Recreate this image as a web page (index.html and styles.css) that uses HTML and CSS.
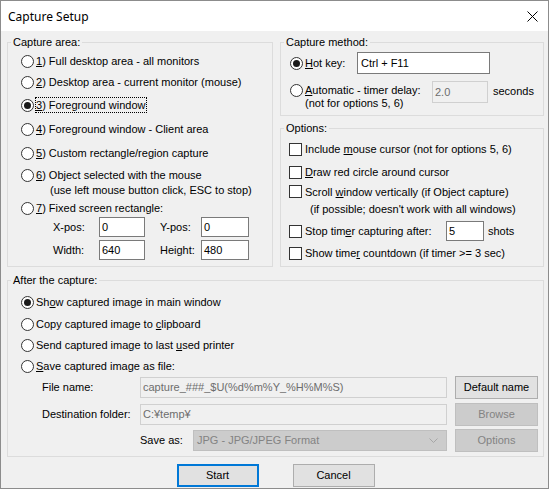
FILE: index.html
```html
<!DOCTYPE html>
<html>
<head>
<meta charset="utf-8">
<link rel="stylesheet" href="styles.css">
</head>
<body>
<div class="window">
  <div class="titlebar">
    <span class="title">Capture Setup</span>
    <svg class="close" width="11" height="11" viewBox="0 0 11 11"><path d="M0.5 0.5 L10.5 10.5 M10.5 0.5 L0.5 10.5" stroke="#000" stroke-width="1" fill="none"/></svg>
  </div>
  <div class="content">
    <div class="top">
      <fieldset class="group area">
        <legend>Capture area:</legend>
        <div class="opt mt4"><span class="radio"></span><span><u>1</u>) Full desktop area - all monitors</span></div>
        <div class="opt mt5"><span class="radio"></span><span><u>2</u>) Desktop area - current monitor (mouse)</span></div>
        <div class="opt mt7"><span class="radio on"></span><span class="focus"><u>3</u>) Foreground window</span></div>
        <div class="opt mt8"><span class="radio"></span><span><u>4</u>) Foreground window - Client area</span></div>
        <div class="opt mt8"><span class="radio"></span><span><u>5</u>) Custom rectangle/region capture</span></div>
        <div class="opt two mt6"><span class="radio"></span><span class="lines"><span class="l1"><u>6</u>) Object selected with the mouse</span><span class="l2 ind14">(use left mouse button click, ESC to stop)</span></span></div>
        <div class="opt mt3"><span class="radio"></span><span><u>7</u>) Fixed screen rectangle:</span></div>
        <div class="fixed">
          <span>X-pos:</span><span class="input">0</span><span class="pl15">Y-pos:</span><span class="input">0</span>
          <span>Width:</span><span class="input">640</span><span class="pl15">Height:</span><span class="input">480</span>
        </div>
      </fieldset>
      <div class="rightcol">
        <fieldset class="group method">
          <legend>Capture method:</legend>
          <div class="mrow hot"><span class="radio on"></span><span class="hlabel"><u>H</u>ot key:</span><span class="input hotkey">Ctrl + F11</span></div>
          <div class="mrow auto"><span class="radio"></span><span class="alabel"><u>A</u>utomatic - timer delay:<br>(not for options 5, 6)</span><span class="input dis delay">2.0</span><span class="secs">seconds</span></div>
        </fieldset>
        <fieldset class="group options">
          <legend>Options:</legend>
          <div class="crow mt6"><span class="check"></span><span>Include <u>m</u>ouse cursor (not for options 5, 6)</span></div>
          <div class="crow mt7"><span class="check"></span><span><u>D</u>raw red circle around cursor</span></div>
          <div class="crow two2 mt4"><span class="check"></span><span class="lines"><span class="l1">Scroll <u>w</u>indow vertically (if Object capture)</span><span class="l2b ind5">(if possible; doesn't work with all windows)</span></span></div>
          <div class="crow stop mt3"><span class="check"></span><span class="slabel">Stop tim<u>e</u>r capturing after:</span><span class="input shots">5</span><span class="shotsl">shots</span></div>
          <div class="crow mt4"><span class="check"></span><span>Show time<u>r</u> countdown (if timer &gt;= 3 sec)</span></div>
        </fieldset>
      </div>
    </div>
    <fieldset class="group after">
      <legend>After the capture:</legend>
      <div class="opt mt7"><span class="radio on"></span><span>Sh<u>o</u>w captured image in main window</span></div>
      <div class="opt mt6"><span class="radio"></span><span>Copy captured image to <u>c</u>lipboard</span></div>
      <div class="opt mt5"><span class="radio"></span><span>Send captured image to last <u>u</u>sed printer</span></div>
      <div class="opt mt5"><span class="radio"></span><span><u>S</u>ave captured image as file:</span></div>
      <div class="filegrid">
        <span class="flabel">File name:</span><span class="input dis wide">capture_###_$U(%d%m%Y_%H%M%S)</span><span class="btn">Default name</span>
        <span class="flabel">Destination folder:</span><span class="input dis wide">C:¥temp¥</span><span class="btn dis">Browse</span>
        <span></span>
        <span class="saveas"><span class="salabel">Save as:</span><span class="select">JPG - JPG/JPEG Format<svg class="chev" width="9" height="5" viewBox="0 0 9 5"><path d="M0.5 0.5 L4.5 4.5 L8.5 0.5" stroke="#a6a6a6" stroke-width="1" fill="none"/></svg></span></span>
        <span class="btn dis">Options</span>
      </div>
    </fieldset>
    <div class="dlgbtns">
      <span class="btn focus-btn">Start</span>
      <span class="btn">Cancel</span>
    </div>
  </div>
</div>
</body>
</html>
```
FILE: styles.css
```css
* { box-sizing: border-box; }
html, body { margin: 0; padding: 0; background: #fff; }
body {
  font-family: "Liberation Sans", Arial, sans-serif;
  font-size: 11px;
  line-height: 13px;
  color: #000;
}
u { text-underline-offset: 1px; }

.window {
  width: 549px;
  height: 489px;
  border: 1px solid #8c8c8c;
  background: #f0f0f0;
  display: flex;
  flex-direction: column;
}
.titlebar {
  flex: none;
  height: 30px;
  background: #fff;
  display: flex;
  align-items: center;
  justify-content: space-between;
  padding: 0 10px 0 7px;
}
.title {
  font-family: "Segoe UI", "Noto Sans", sans-serif;
  font-size: 12px;
}
.close { display: block; }

.content { padding: 5px 4px 0 6px; }
.top { display: flex; gap: 7px; align-items: stretch; }

.group {
  margin: 0;
  padding: 0;
  min-width: 0;
  border: 1px solid #dcdcdc;
}
.group legend {
  padding: 0 2px;
  margin-left: 3px;
  line-height: 13px;
}

.area { width: 266px; padding-bottom: 6px; }
.rightcol { width: 264px; display: flex; flex-direction: column; }
.method { padding-bottom: 5px; }
.options { margin-top: 6px; padding-bottom: 5px; }
.after { margin-top: 7px; padding-bottom: 4px; }

.mt3 { margin-top: 3px; }
.mt4 { margin-top: 4px; }
.mt5 { margin-top: 5px; }
.mt6 { margin-top: 6px; }
.mt7 { margin-top: 7px; }
.mt8 { margin-top: 8px; }

.radio {
  flex: none;
  position: relative;
  width: 13px;
  height: 13px;
  border: 1px solid #333;
  border-radius: 50%;
  background: #fff;
}
.radio.on::after {
  content: "";
  position: absolute;
  left: 2px;
  top: 2px;
  width: 7px;
  height: 7px;
  border-radius: 50%;
  background: #1a1a1a;
}
.check {
  flex: none;
  width: 13px;
  height: 13px;
  border: 1px solid #333;
  background: #fff;
  margin: 0 3px 0 8px;
}

.opt { display: flex; align-items: center; height: 16px; white-space: nowrap; }
.opt .radio { margin: 0 2px 0 13px; }
.focus {
  display: inline-block;
  line-height: 14px;
  padding-right: 1px;
  outline: 1px dotted #000;
}
.opt.two { height: 30px; align-items: flex-start; }
.opt.two .radio { margin-top: 2px; }
.lines { display: flex; flex-direction: column; }
.l1 { line-height: 16px; }
.l2 { line-height: 14px; }
.l2b { line-height: 18px; }
.ind14 { padding-left: 14px; }
.ind5 { padding-left: 5px; }

.input {
  display: flex;
  align-items: center;
  height: 20px;
  background: #fff;
  border: 1px solid #7a7a7a;
  padding-left: 2px;
  white-space: nowrap;
  overflow: hidden;
}
.input.dis {
  background: #f0f0f0;
  border-color: #d0d0d0;
  color: #6d6d6d;
}

.fixed {
  display: grid;
  grid-template-columns: 46px 46px 56px 48px;
  grid-auto-rows: 20px;
  row-gap: 3px;
  align-items: center;
  margin: 1px 0 0 45px;
}
.pl15 { padding-left: 15px; }

.mrow { display: flex; white-space: nowrap; }
.mrow .radio { margin: 0 2px 0 9px; }
.hot { height: 22px; align-items: center; margin-top: 3px; }
.hlabel { width: 52px; }
.hotkey { width: 133px; height: 22px; padding-left: 3px; }
.auto { align-items: flex-start; margin-top: 7px; }
.auto .radio { margin-top: 3px; }
.alabel { width: 127px; margin-top: 3px; }
.delay { width: 56px; height: 22px; }
.secs { margin: 4px 0 0 5px; }

.crow { display: flex; align-items: center; height: 16px; white-space: nowrap; }
.crow.two2 { height: auto; align-items: flex-start; }
.crow.two2 .check { margin-top: 1px; }
.stop { height: 20px; }
.slabel { width: 141px; }
.shots { width: 38px; }
.shotsl { margin-left: 4px; }

.filegrid {
  display: grid;
  grid-template-columns: 98px 307px 83px;
  grid-template-rows: 23px 23px 23px;
  column-gap: 0;
  row-gap: 3.5px;
  align-items: center;
  margin: 2px 0 0 34px;
}
.filegrid .btn { margin-left: 8px; width: 83px; }
.wide { height: 21px; }
.saveas { display: flex; align-items: center; }
.salabel { width: 53px; }
.select {
  position: relative;
  display: flex;
  align-items: center;
  width: 254px;
  height: 21px;
  background: #cccccc;
  border: 1px solid #bfbfbf;
  color: #838383;
  padding-left: 3px;
}
.chev { position: absolute; right: 8px; top: 7px; }

.btn {
  display: flex;
  align-items: center;
  justify-content: center;
  height: 23px;
  background: #e1e1e1;
  border: 1px solid #adadad;
  white-space: nowrap;
}
.btn.dis {
  background: #cccccc;
  border-color: #bfbfbf;
  color: #838383;
}
.dlgbtns {
  display: flex;
  justify-content: center;
  gap: 34px;
  margin-top: 7px;
}
.dlgbtns .btn { width: 82px; }
.focus-btn { border: 2px solid #0078d7; }
```
